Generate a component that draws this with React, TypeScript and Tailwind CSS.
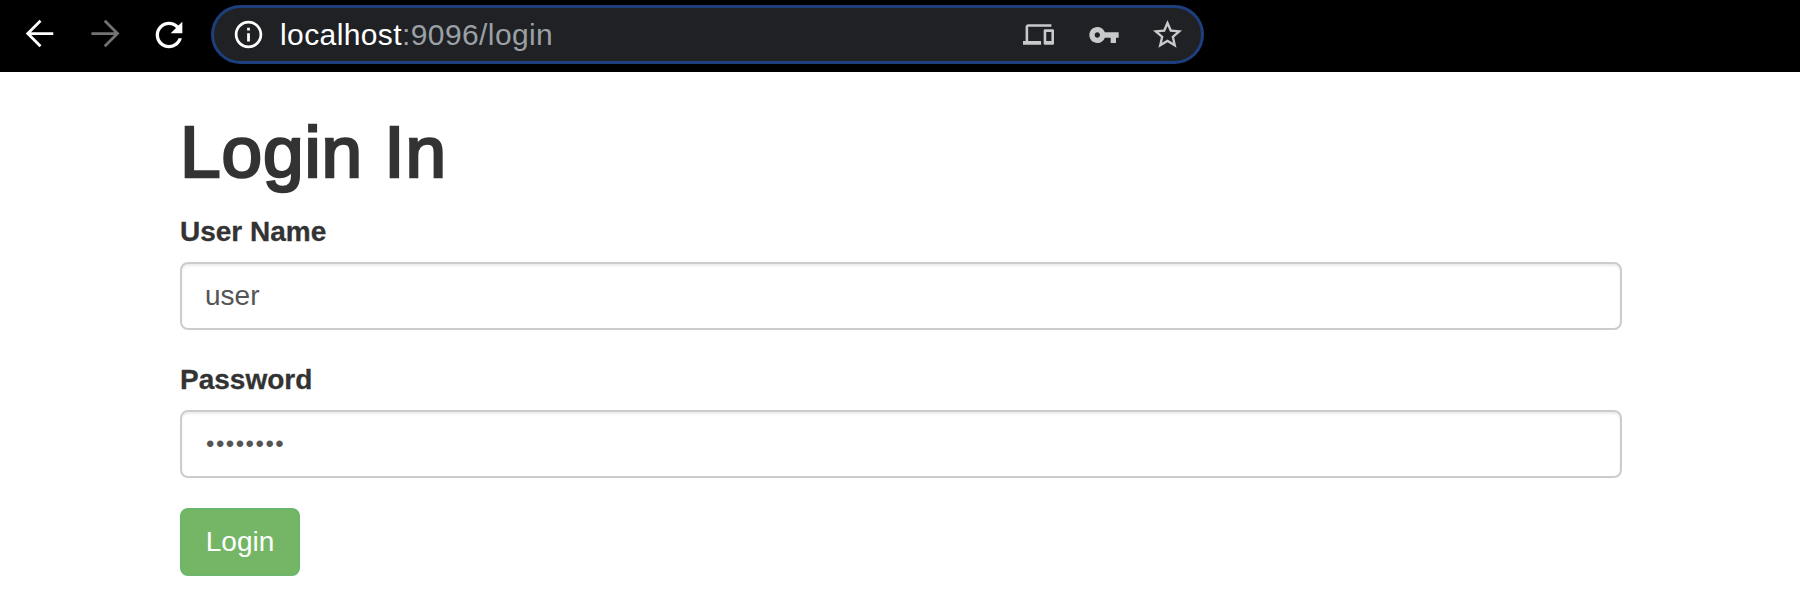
const toolbarIcons = {
  reload:
    "M17.65 6.35C16.2 4.9 14.21 4 12 4c-4.42 0-7.99 3.58-7.99 8s3.57 8 7.99 8c3.73 0 6.84-2.55 7.73-6h-2.08c-.82 2.33-3.04 4-5.65 4-3.31 0-6-2.69-6-6s2.69-6 6-6c1.66 0 3.14.69 4.22 1.78L13 11h7V4l-2.35 2.35z",
  info: "M11 7h2v2h-2zm0 4h2v6h-2zm1-9C6.48 2 2 6.48 2 12s4.48 10 10 10 10-4.48 10-10S17.52 2 12 2zm0 18c-4.41 0-8-3.59-8-8s3.59-8 8-8 8 3.59 8 8-3.59 8-8 8z",
  devices:
    "M4 6h18V4H4c-1.1 0-2 .9-2 2v11H0v3h14v-3H4V6zm19 2h-6c-.55 0-1 .45-1 1v10c0 .55.45 1 1 1h6c.55 0 1-.45 1-1V9c0-.55-.45-1-1-1zm-1 9h-4v-7h4v7z",
  key: "M12.65 10C11.83 7.67 9.61 6 7 6c-3.31 0-6 2.69-6 6s2.69 6 6 6c2.61 0 4.83-1.67 5.65-4H17v4h4v-4h2v-4H12.65zM7 14c-1.1 0-2-.9-2-2s.9-2 2-2 2 .9 2 2-.9 2-2 2z",
  star: "M22 9.24l-7.19-.62L12 2 9.19 8.63 2 9.24l5.46 4.73L5.82 21 12 17.27 18.18 21l-1.63-7.03L22 9.24zM12 15.4l-3.76 2.27 1-4.28-3.32-2.88 4.38-.38L12 6.1l1.71 4.04 4.38.38-3.32 2.88 1 4.28L12 15.4z",
};

function Icon({ d, size, className }: { d: string; size: number; className: string }) {
  return (
    <svg width={size} height={size} viewBox="0 0 24 24" fill="currentColor" className={className}>
      <path d={d} />
    </svg>
  );
}

function Arrow({ d, className }: { d: string; className: string }) {
  return (
    <svg width="45" height="45" viewBox="0 0 24 24" fill="none" stroke="currentColor" strokeWidth="1.5" className={className}>
      <path d={d} />
    </svg>
  );
}

const labelClass = "mb-[10px] block text-[28px] leading-[40px] font-bold [-webkit-text-stroke:0.3px_#333]";
const inputClass =
  "h-[68px] w-full rounded-[8px] border-2 border-[#ccc] text-[#555] shadow-[inset_0_2px_2px_rgba(0,0,0,0.075)] outline-none";

export default function App() {
  return (
    <div className="h-[604px] bg-white font-['Liberation_Sans',Arial,sans-serif]">
      <header className="flex h-[72px] items-start bg-black pl-[18px] pt-[5px]">
        <div className="flex h-[59px] items-center gap-[19.5px]">
          <Arrow d="M18.8 11.5H5.2M12 4.7 5.2 11.5l6.8 6.8" className="text-white" />
          <Arrow d="M4.5 11.5h13.9M11.6 4.7l6.8 6.8-6.8 6.8" className="text-[#737373]" />
          <div className="flex w-[45px] justify-center pr-[2px]">
            <Icon d={toolbarIcons.reload} size={40} className="text-white" />
          </div>
        </div>
        <div className="ml-[19px] flex h-[59px] w-[993px] items-center rounded-full border-[3px] border-[#1e3f7e] bg-[#202124] pl-[18px] pr-[16px]">
          <Icon d={toolbarIcons.info} size={33} className="text-white" />
          <div className="ml-[15px] flex-1 text-[30px] tracking-[0.4px] text-white">
            localhost<span className="text-[#9aa0a6]">:9096/login</span>
          </div>
          <div className="flex items-center">
            <Icon d={toolbarIcons.devices} size={31} className="text-[#c8c9cb]" />
            <Icon d={toolbarIcons.key} size={32} className="ml-[34px] text-[#c8c9cb]" />
            <Icon d={toolbarIcons.star} size={35} className="ml-[30px] text-[#c8c9cb]" />
          </div>
        </div>
      </header>

      <main className="pl-[180px] pr-[178px] text-[#333]">
        <h1 className="mb-[20px] mt-[39px] text-[73px] leading-[81px] font-medium tracking-[0.9px] [-webkit-text-stroke:2.6px_#333]">
          Login In
        </h1>
        <form>
          <div className="mb-[30px]">
            <label className={labelClass}>User Name</label>
            <input readOnly value="user" className={`${inputClass} px-[23px] text-[28px]`} />
          </div>
          <div className="mb-[30px]">
            <label className={labelClass}>Password</label>
            <input readOnly type="password" value="password" className={`${inputClass} px-[24px] text-[24px] tracking-[1.5px]`} />
          </div>
          <button
            type="button"
            className="h-[68px] w-[120px] rounded-[8px] border-2 border-[#6cb66c] bg-[#74b666] text-[28px] text-white"
          >
            Login
          </button>
        </form>
      </main>
    </div>
  );
}
